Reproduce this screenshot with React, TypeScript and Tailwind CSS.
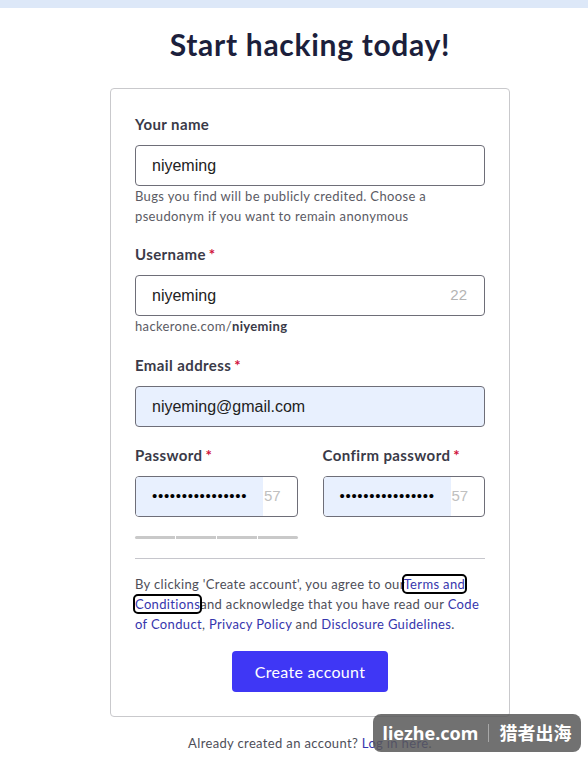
import React from 'react'

const body = { fontFamily: 'Lato, "Open Sans", sans-serif' }
const inputFont = { fontFamily: '"Liberation Sans", Arial, sans-serif' }

function Label({ text, required }: { text: string; required?: boolean }) {
    return (
        <div className="text-[15px] leading-5 font-bold tracking-[0.4px] text-[#3a3a48] mb-[11px]">
            {text}
            {required && <span className="text-[#d0103a] ml-[3px]">*</span>}
        </div>
    )
}

function TextBox({ value, counter, filled }: { value: string; counter?: string; filled?: boolean }) {
    return (
        <div
            className={`h-[41px] w-full flex items-center justify-between border border-[#6e6e78] rounded-[4px] pl-4 pr-[17px] ${filled ? 'bg-[#e8f0fe]' : 'bg-white'}`}
        >
            <span className="text-[16px] text-[#222]" style={inputFont}>{value}</span>
            {counter && <span className="text-[15px] text-[#b4b4b4]" style={inputFont}>{counter}</span>}
        </div>
    )
}

function PasswordBox() {
    return (
        <div className="h-[41px] w-full flex items-stretch border border-[#6e6e78] rounded-[4px] overflow-hidden bg-white">
            <div className="w-[127px] bg-[#e8f0fe] flex items-center pl-[16px]">
                <span className="text-[15px] text-black tracking-[0.7px]" style={inputFont}>
                    ••••••••••••••••
                </span>
            </div>
            <span className="flex items-center text-[15px] text-[#c0c0c0] pl-[1px]" style={inputFont}>57</span>
        </div>
    )
}

function Link({ children, focused }: { children: React.ReactNode; focused?: boolean }) {
    return (
        <span
            className={`text-[#3636ad] ${focused ? 'outline-2 outline-black rounded-[3px] box-decoration-clone' : ''}`}
        >
            {children}
        </span>
    )
}

export default function App() {
    return (
        <div className="relative min-h-screen bg-white" style={body}>
            <div className="h-2 bg-[#dde8f8]" />

            <div className="flex flex-col items-center pl-8">
                <h1 className="mt-[18px] text-[30px] leading-9 font-bold text-[#1c1f3c] tracking-[0.7px]">
                    Start hacking today!
                </h1>

                <div className="mt-[26px] w-[400px] border border-[#c9c9cc] rounded-[4px] px-6 pt-[25px] pb-6 flex flex-col">
                    <Label text="Your name" />
                    <TextBox value="niyeming" />
                    <p className="text-[13px] leading-5 tracking-[0.35px] text-[#5b5b64]">
                        Bugs you find will be publicly credited. Choose a pseudonym if you want to remain anonymous
                    </p>

                    <div className="mt-[18px]">
                        <Label text="Username" required />
                        <TextBox value="niyeming" counter="22" />
                        <p className="text-[13px] leading-5 tracking-[0.35px] text-[#5b5b64]">
                            hackerone.com/<span className="font-bold text-[#3a3a48]">niyeming</span>
                        </p>
                    </div>

                    <div className="mt-[19px]">
                        <Label text="Email address" required />
                        <TextBox value="niyeming@gmail.com" filled />
                    </div>

                    <div className="mt-[18px] grid grid-cols-2 gap-[25px]">
                        <div>
                            <Label text="Password" required />
                            <PasswordBox />
                            <div className="mt-[19px] flex gap-px">
                                <div className="h-[3px] flex-1 rounded-l-full bg-[#c9c9c9]" />
                                <div className="h-[3px] flex-1 bg-[#c9c9c9]" />
                                <div className="h-[3px] flex-1 bg-[#c9c9c9]" />
                                <div className="h-[3px] flex-1 rounded-r-full bg-[#c9c9c9]" />
                            </div>
                        </div>
                        <div>
                            <Label text="Confirm password" required />
                            <PasswordBox />
                        </div>
                    </div>

                    <hr className="mt-[19px] border-t border-[#c6c6cc]" />

                    <p className="mt-[15px] text-[13px] leading-5 tracking-[0.35px] text-[#4e4e58]">
                        By clicking 'Create account', you agree to our<Link focused>Terms and Conditions</Link>and acknowledge that you have read our <Link>Code of Conduct</Link>, <Link>Privacy Policy</Link> and <Link>Disclosure Guidelines</Link>.
                    </p>

                    <button className="mt-[17px] self-center w-[156px] h-[41px] rounded-[4px] bg-[#3f37f5] text-white text-[16px] tracking-[0.3px]">
                        Create account
                    </button>
                </div>

                <p className="mt-4 text-[13px] leading-5 tracking-[0.35px] text-[#4e4e58]">
                    Already created an account? <Link>Log in here</Link>.
                </p>
            </div>

            {/* site watermark badge */}
            <div
                className="absolute top-[714px] right-[7px] w-[208px] h-[38px] rounded-lg bg-[rgba(88,88,88,0.85)] flex items-center justify-center gap-[10px] text-white font-bold text-[18px]"
                style={{ fontFamily: '"Noto Sans", "Noto Sans CJK SC", sans-serif' }}
            >
                <span>liezhe.com</span>
                <span className="w-px h-[18px] bg-[#a8a8a8]" />
                <span>猎者出海</span>
            </div>
        </div>
    )
}
